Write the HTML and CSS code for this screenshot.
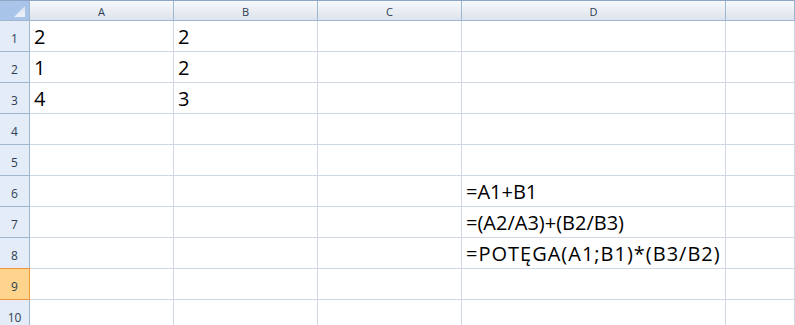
FILE: index.html
```html
<!DOCTYPE html>
<html lang="pl">
<head>
  <meta charset="UTF-8" />
  <title>Arkusz1</title>
  <link rel="stylesheet" href="styles.css">
</head>
<body>

  <!-- arkusz -->
  <div class="sheet">
    <!-- naglowki kolumn -->
    <div class="corner"><span class="corner-tri"></span></div>
    <div class="col-head">A</div>
    <div class="col-head">B</div>
    <div class="col-head">C</div>
    <div class="col-head">D</div>
    <div class="col-head"></div>

    <div class="row-head">1</div>
    <div class="cell">2</div><div class="cell">2</div><div class="cell"></div><div class="cell"></div><div class="cell"></div>

    <div class="row-head">2</div>
    <div class="cell">1</div><div class="cell">2</div><div class="cell"></div><div class="cell"></div><div class="cell"></div>

    <div class="row-head">3</div>
    <div class="cell">4</div><div class="cell">3</div><div class="cell"></div><div class="cell"></div><div class="cell"></div>

    <div class="row-head">4</div>
    <div class="cell"></div><div class="cell"></div><div class="cell"></div><div class="cell"></div><div class="cell"></div>

    <div class="row-head">5</div>
    <div class="cell"></div><div class="cell"></div><div class="cell"></div><div class="cell"></div><div class="cell"></div>

    <div class="row-head">6</div>
    <div class="cell"></div><div class="cell"></div><div class="cell"></div><div class="cell formula">=A1+B1</div><div class="cell"></div>

    <div class="row-head">7</div>
    <div class="cell"></div><div class="cell"></div><div class="cell"></div><div class="cell formula">=(A2/A3)+(B2/B3)</div><div class="cell"></div>

    <div class="row-head">8</div>
    <div class="cell"></div><div class="cell"></div><div class="cell"></div><div class="cell formula wide">=POTĘGA(A1;B1)*(B3/B2)</div><div class="cell"></div>

    <div class="row-head active">9</div>
    <div class="cell"></div><div class="cell"></div><div class="cell"></div><div class="cell"></div><div class="cell"></div>

    <div class="row-head">10</div>
    <div class="cell"></div><div class="cell"></div><div class="cell"></div><div class="cell"></div><div class="cell"></div>
  </div>

</body>
</html>
```

FILE: styles.css
```css
/* ======= reset ======= */
* {
  box-sizing: border-box;
  margin: 0;
  padding: 0;
}
body {
  background: #fff;
  font-family: "Open Sans", "Liberation Sans", Arial, sans-serif;
  color: #000;
  overflow: hidden;
}

/* ======= siatka arkusza ======= */
.sheet {
  display: grid;
  grid-template-columns: 30px 144px 144px 144px 264px 1fr;
  grid-template-rows: 21px repeat(10, 31px);
  width: 795px;
}

.corner {
  position: relative;
  background: #a9c4e9;
  border-top: 1px solid #8ea5c4;
  border-right: 1px solid #9eb6ce;
  border-bottom: 1px solid #9eb6ce;
}
.corner-tri {
  position: absolute;
  right: 4px;
  bottom: 3px;
  width: 11px;
  height: 11px;
  background: linear-gradient(#d7e1ef, #eef2f8);
  clip-path: polygon(100% 0, 100% 100%, 0 100%);
}

.col-head {
  display: flex;
  align-items: center;
  justify-content: center;
  background: linear-gradient(#f6f8fb, #dde3ec);
  border-top: 1px solid #8ea5c4;
  border-right: 1px solid #9eb6ce;
  border-bottom: 1px solid #9eb6ce;
  font-size: 11px;
  color: #2c3e55;
  padding-top: 1px;
}

.row-head {
  display: flex;
  align-items: flex-end;
  justify-content: center;
  padding-bottom: 4px;
  background: #e4ecf7;
  border-right: 1px solid #9eb6ce;
  border-bottom: 1px solid #9eb6ce;
  font-size: 12px;
  color: #2c3e55;
}
.row-head.active {
  background: #ffd58d;
  border-top: 1px solid #f29536;
  border-right: 1px solid #f29536;
  border-bottom: 1px solid #f29536;
  margin-top: -1px;
}

.cell {
  display: flex;
  align-items: flex-end;
  padding: 0 0 1px 4px;
  border-right: 1px solid #d0d7e5;
  border-bottom: 1px solid #d0d7e5;
  font-size: 20px;
  line-height: 26px;
  white-space: nowrap;
  overflow: visible;
}
.formula {
  padding-left: 4px;
}
.wide {
  letter-spacing: 1px;
}
```
